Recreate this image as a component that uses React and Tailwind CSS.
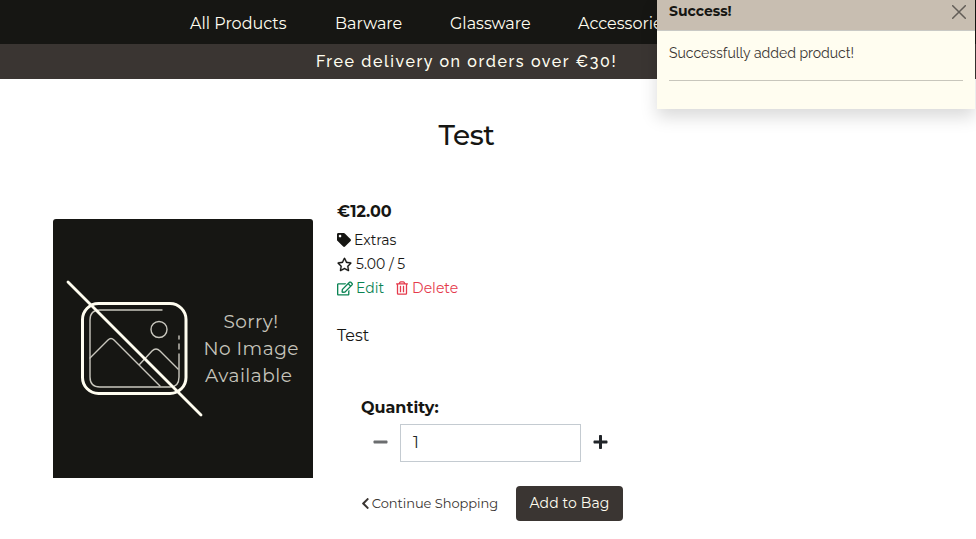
import { FaTag, FaRegStar, FaRegEdit, FaRegTrashAlt, FaChevronLeft, FaMinus, FaPlus } from 'react-icons/fa';

const navItems = [
  { label: 'All Products', style: 'w-[97px]' },
  { label: 'Barware', style: 'w-[67px]' },
  { label: 'Glassware', style: 'w-[80px]' },
  { label: 'Accessories', style: 'w-[92px]' },
];

function NoImage() {
  return (
    <svg viewBox="0 0 260 259" className="block h-[259px] w-[260px] rounded-t-[3px] bg-[#161613]" fill="none" stroke="#fffdf0" strokeLinecap="round" strokeLinejoin="round">
      <rect x="29.5" y="84.5" width="103.5" height="90" rx="16" strokeWidth="3" />
      <g stroke="#c9c7be" strokeWidth="1.4">
        <path d="M109 91H47Q37 91 37 101V158Q37 168 47 168H117Q126 168 126 158V135M126 130V125M126 120V117" />
        <circle cx="106" cy="110.500" r="8" />
        <path d="M37 139L55 121Q58 118 61 121L107 167M86 146L99 132Q103 128 107 132L125 150" />
      </g>
      <path d="M15 63L148 196" strokeWidth="2.8" />
      <g fill="#c6c4bb" stroke="none" fontFamily="Montserrat, sans-serif" fontWeight="400" fontSize="18.500">
        <text x="170.500" y="109" textLength="54.500">Sorry!</text>
        <text x="150.500" y="136" textLength="95">No Image</text>
        <text x="152" y="163" textLength="87">Available</text>
      </g>
    </svg>
  );
}

function Toast() {
  return (
    <aside className="absolute left-[657px] top-0 h-[109px] w-[318px] bg-[#fffdf0] font-['Raleway','Lato',sans-serif] text-sm shadow-[0_8px_16px_rgba(0,0,0,0.15)]">
      <header className="flex h-[31px] items-start justify-between border-b border-[#c9c9c5] bg-[#c8beb1] pl-3 pr-[9px]">
        <strong className="font-['Montserrat','Inter',sans-serif] leading-[23px] text-[#161613]">Success!</strong>
        <svg viewBox="0 0 14 14" className="mt-[5px] h-[14px] w-[14px]" stroke="#625d57" strokeWidth="1.5" strokeLinecap="round">
          <path d="M.7.7 13.3 13.3M13.3.7.7 13.3" />
        </svg>
      </header>
      <div className="px-3 pt-3">
        <p className="leading-[21px] text-[#3a3532]">Successfully added product!</p>
        <hr className="mt-4 border-[#c8c6bc]" />
      </div>
    </aside>
  );
}

export default function App() {
  return (
    <div className="relative h-[539px] w-[976px] overflow-hidden bg-white font-['Montserrat','Inter',sans-serif] text-[#161613]">
      <nav className="flex h-11 items-center gap-12 bg-[#161613] pl-[190px] pt-[3px] text-base text-[#fffdf0]">
        {navItems.map((item) => (
          <a key={item.label} className={`whitespace-nowrap ${item.style}`}>{item.label}</a>
        ))}
      </nav>
      <div className="h-[35px] bg-[#3a3532] pl-[316px] font-['Raleway','Lato',sans-serif] text-base font-medium leading-[35px] tracking-[1.6px] text-[#fffdf0]">
        <span>Free delivery on orders over €30!</span>
      </div>
      <main>
        <h1 className="w-[933px] pt-[39px] text-center text-[28px] font-medium leading-[34px] tracking-[-0.4px]">Test</h1>
        <div className="flex gap-6 pl-[53px]">
          <div className="pt-[67px]"><NoImage /></div>
          <section className="w-[300px] pt-12">
            <p className="text-base font-bold leading-6"><span>€12.00</span></p>
            <p className="mt-1 flex h-6 items-center gap-[3px] text-sm"><FaTag /><span>Extras</span></p>
            <p className="flex h-6 items-center gap-1 text-sm"><FaRegStar className="h-[15px] w-[15px]" strokeWidth="8" /><span>5.00 / 5</span></p>
            <p className="flex h-6 items-center text-sm">
              <a className="flex items-center gap-[3px] text-[#0b8454]"><FaRegEdit className="h-[15px] w-4" /><span>Edit</span></a>
              <a className="ml-3 flex items-center gap-1 text-[#e53a4b]"><FaRegTrashAlt className="h-[14px] w-3" /><span>Delete</span></a>
            </p>
            <p className="mt-6 text-base leading-6"><span>Test</span></p>
            <form className="pl-6 pt-12">
              <label className="block text-base font-bold leading-6"><span>Quantity:</span></label>
              <div className="mt-1 flex items-center pb-px">
                <FaMinus className="-mt-[3px] ml-3 h-4 w-[15px] text-[#6b6d6f]" />
                <div className="ml-3 h-[38px] w-[181px] border border-[#c4cbd1] pl-3 text-base leading-[36px] text-[#212529]">1</div>
                <FaPlus className="-mt-[3px] ml-3 h-4 w-[15px] text-[#212529]" />
              </div>
              <div className="mt-[23px] flex items-center">
                <a className="flex w-[137px] items-center gap-[2px] whitespace-nowrap text-[13px] tracking-[-0.06px] text-[#3a3532]"><FaChevronLeft className="h-[13px] w-[10px]" /><span>Continue Shopping</span></a>
                <button type="button" className="ml-[18px] h-[35px] w-[107px] shrink-0 rounded bg-[#3a3532] pb-[2px] text-sm tracking-[0.1px] text-[#fffdf0]"><span>Add to Bag</span></button>
              </div>
            </form>
          </section>
        </div>
      </main>
      <Toast />
    </div>
  );
}
